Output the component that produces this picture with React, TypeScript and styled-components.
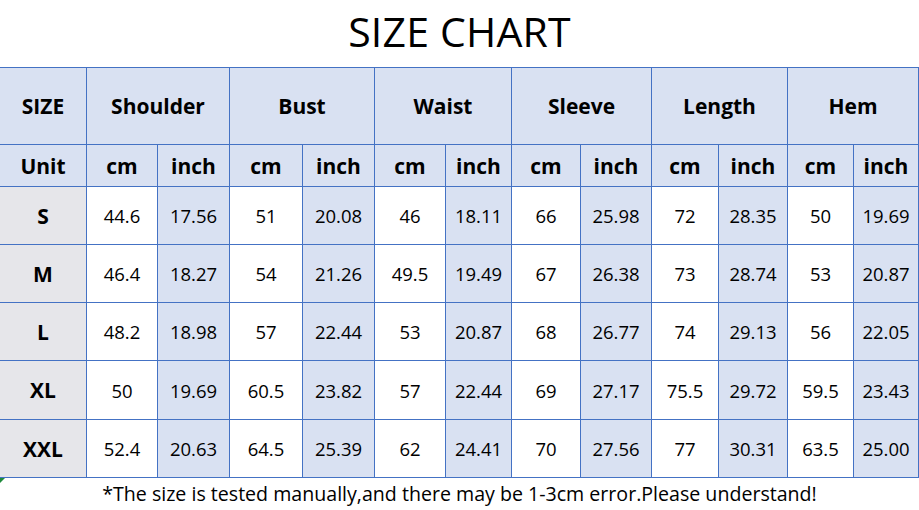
import {Fragment} from 'react';
import styled, {createGlobalStyle} from 'styled-components';

const GlobalStyle = createGlobalStyle`
  html, body {
    margin: 0;
    padding: 0;
    background: #fff;
  }
  body {
    font-family: "Open Sans", "Noto Sans CJK SC", sans-serif;
    color: #000;
  }
`;

const Page = styled.div`
  width: 919px;
  height: 510px;
  display: flex;
  flex-direction: column;
  background: #fff;
  overflow: hidden;
`;

const Title = styled.h1`
  margin: 0;
  height: 67px;
  padding-bottom: 5px;
  box-sizing: border-box;
  display: flex;
  align-items: center;
  justify-content: center;
  font-size: 41px;
  font-weight: 400;
  letter-spacing: 0.2px;
`;

const Table = styled.div`
  display: grid;
  grid-template-columns: 86px 70px 71px 72px 71px 70px 65px 68px 70px 66px 68px 65px 64px;
  grid-template-rows: 76px 41px 57px 57px 57px 58px 57px;
  gap: 1px;
  background: #4472c4;
  border-top: 1px solid #4472c4;
  border-right: 1px solid #4472c4;
  border-bottom: 1px solid #4472c4;
  width: 918px;
`;

const Cell = styled.div<{tone: 'head' | 'white' | 'blue' | 'gray'; span?: number; bold?: boolean}>`
  grid-column: span ${p => p.span ?? 1};
  display: flex;
  align-items: center;
  justify-content: center;
  font-size: ${p => (p.bold ? '21px' : '18.5px')};
  font-weight: ${p => (p.bold ? 700 : 400)};
  background: ${p =>
    p.tone === 'white' ? '#fff' : p.tone === 'gray' ? '#e6e6ea' : '#d9e1f2'};
`;

const Caption = styled.div`
  position: relative;
  flex: 1;
  display: flex;
  align-items: center;
  justify-content: center;
  font-size: 19.6px;
  padding-bottom: 2px;

  &::before {
    content: '';
    position: absolute;
    left: 0;
    top: 0;
    border-top: 5px solid #1e8a3a;
    border-right: 5px solid transparent;
  }
`;

const groups = ['Shoulder', 'Bust', 'Waist', 'Sleeve', 'Length', 'Hem'];

const rows: [string, string[]][] = [
  ['S', ['44.6', '17.56', '51', '20.08', '46', '18.11', '66', '25.98', '72', '28.35', '50', '19.69']],
  ['M', ['46.4', '18.27', '54', '21.26', '49.5', '19.49', '67', '26.38', '73', '28.74', '53', '20.87']],
  ['L', ['48.2', '18.98', '57', '22.44', '53', '20.87', '68', '26.77', '74', '29.13', '56', '22.05']],
  ['XL', ['50', '19.69', '60.5', '23.82', '57', '22.44', '69', '27.17', '75.5', '29.72', '59.5', '23.43']],
  ['XXL', ['52.4', '20.63', '64.5', '25.39', '62', '24.41', '70', '27.56', '77', '30.31', '63.5', '25.00']],
];

export default function App() {
  return (
    <Page>
      <GlobalStyle />
      <Title>SIZE CHART</Title>
      <Table>
        <Cell tone="head" bold>SIZE</Cell>
        {groups.map(g => (
          <Cell key={g} tone="head" span={2} bold>{g}</Cell>
        ))}

        <Cell tone="head" bold>Unit</Cell>
        {groups.map(g => (
          <Fragment key={g}>
            <Cell tone="head" bold>cm</Cell>
            <Cell tone="head" bold>inch</Cell>
          </Fragment>
        ))}

        {rows.map(([size, values]) => (
          <Fragment key={size}>
            <Cell tone="gray" bold>{size}</Cell>
            {values.map((v, i) => (
              <Cell key={i} tone={i % 2 === 0 ? 'white' : 'blue'}>{v}</Cell>
            ))}
          </Fragment>
        ))}
      </Table>
      <Caption>*The size is tested manually,and there may be 1-3cm error.Please understand!</Caption>
    </Page>
  );
}
